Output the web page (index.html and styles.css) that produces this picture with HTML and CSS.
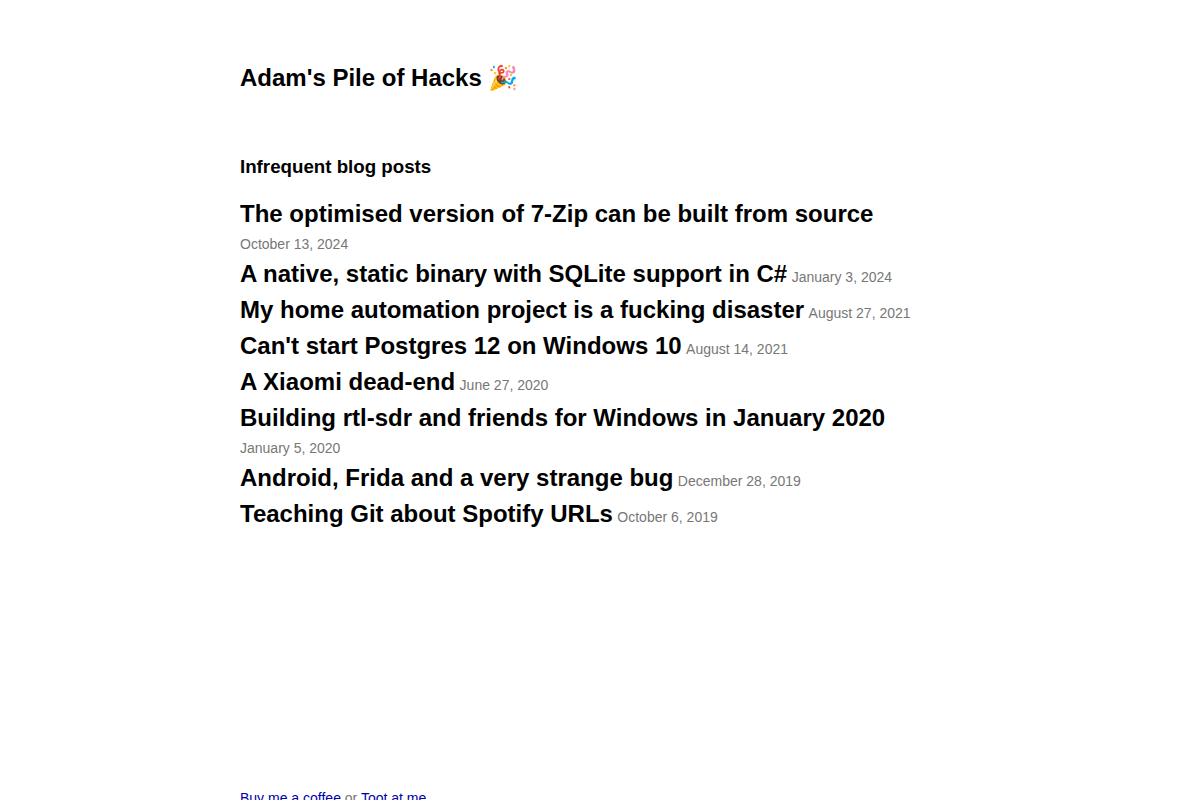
FILE: index.html
```
<!DOCTYPE html>
<html lang="en">
<head>
    <meta charset="utf-8">
    <meta content="initial-scale=1, width=device-width" name="viewport">
    <title>Adam's Pile of Hacks</title>
    <link rel="stylesheet" href="styles.css">
</head>

<body>
    <header class="site-header">
        <h1><a href="/">Adam's Pile of Hacks 🎉</a></h1>
    </header>
    <main class="content">
        <h3>Infrequent blog posts</h3>
        <ul class="posts">
            <li><a href="/7-zip">The optimised version of 7-Zip can be built from source</a> <time datetime="2024-10-13">October 13, 2024</time></li>
            <li><a href="/sqlite">A native, static binary with SQLite support in C#</a> <time datetime="2024-01-03">January 3, 2024</time></li>
            <li><a href="/home-automation">My home automation project is a fucking disaster</a> <time datetime="2021-08-27">August 27, 2021</time></li>
            <li><a href="/postgres">Can't start Postgres 12 on Windows 10</a> <time datetime="2021-08-14">August 14, 2021</time></li>
            <li><a href="/xiaomi">A Xiaomi dead-end</a> <time datetime="2020-06-27">June 27, 2020</time></li>
            <li><a href="/rtl-sdr">Building rtl-sdr and friends for Windows in January 2020</a> <time datetime="2020-01-05">January 5, 2020</time></li>
            <li><a href="/frida">Android, Frida and a very strange bug</a> <time datetime="2019-12-28">December 28, 2019</time></li>
            <li><a href="/spotify-urls">Teaching Git about Spotify URLs</a> <time datetime="2019-10-06">October 6, 2019</time></li>
        </ul>
    </main>
    <footer class="site-footer">
        <a href="/coffee">Buy me a coffee</a> or <a href="/toot">Toot at me</a>
    </footer>
</body>
</html>
```

FILE: styles.css
```
* {
    box-sizing: border-box;
}
body {
    background-color: #FFF;
    color: #000;
    font-family: "Liberation Sans", Arial, sans-serif;
    font-size: 16px;
    line-height: 24px;
    margin: 0 auto;
    max-width: 720px;
}
h1 {
    font-size: 24px;
    line-height: 36px;
    margin: 0;
}
h3 {
    line-height: 28px;
    margin: 0 0 15px;
}
h1 a,
.posts a {
    color: #000;
    text-decoration: none;
}
.site-header {
    padding: 60px 0 57px;
}
.posts {
    list-style: none;
    margin: 0;
    padding: 0;
}
.posts a {
    font-size: 24px;
    font-weight: bold;
    line-height: 36px;
}
time {
    color: #777;
    display: inline-block;
    font-size: 14px;
    line-height: 20px;
}
.site-footer {
    color: #777;
    font-size: 14px;
    padding: 254px 0 60px;
}
.site-footer a {
    color: #00A;
}
```
